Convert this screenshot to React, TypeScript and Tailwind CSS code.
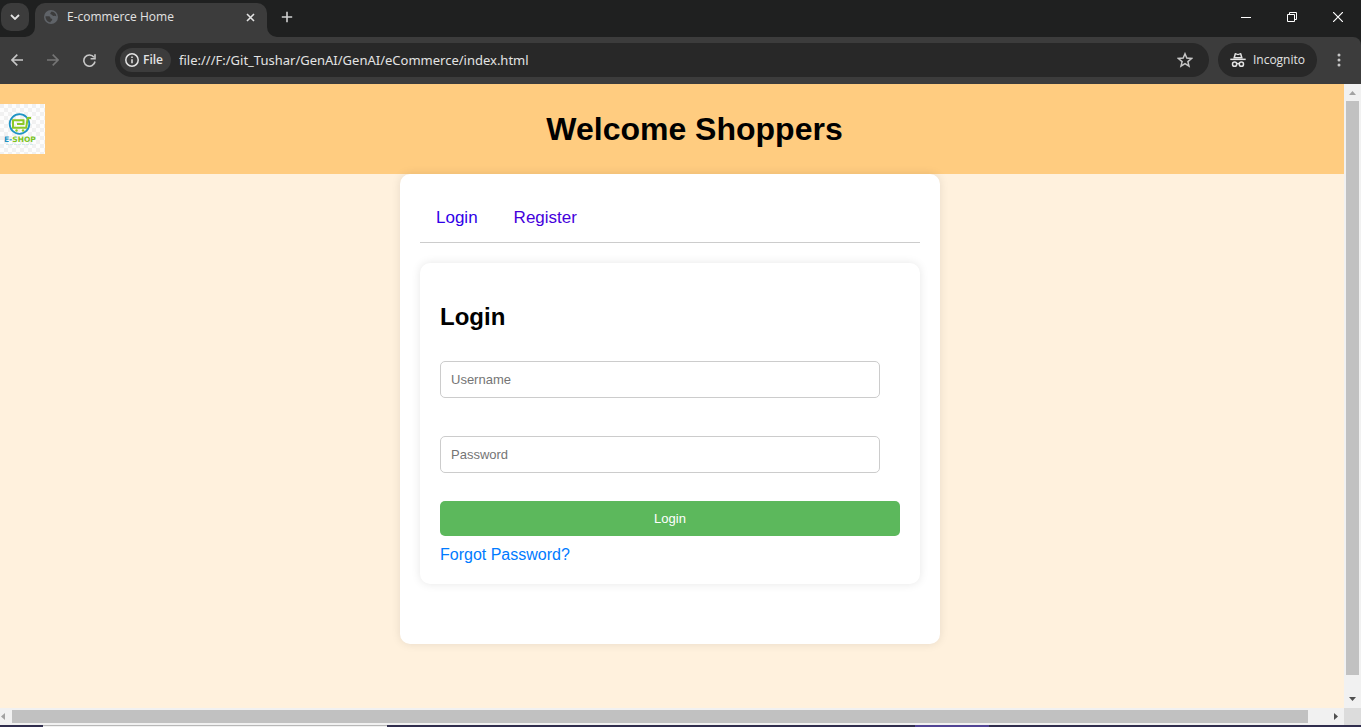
import { useState } from 'react';

function TabStrip() {
  return (
    <div className="flex h-[37px] shrink-0 bg-[#1f2020]">
      <button aria-label="Search tabs" className="ml-px mt-[3px] flex size-7 items-center justify-center rounded-[10px] bg-[#3c3c3c]">
        <svg width="10" height="6" viewBox="0 0 10 6" fill="none" stroke="#e3e3e3" strokeWidth="1.800">
          <path d="M1 1l4 4 4-4" />
        </svg>
      </button>
      <svg className="mt-auto ml-[-4px] shrink-0" width="10" height="10" viewBox="0 0 10 10" fill="#3c3c3c">
        <path d="M10 0v10H0A10 10 0 0 0 10 0z" />
      </svg>
      <div className="mt-[3px] flex w-[232px] items-center rounded-t-[10px] bg-[#3c3c3c] pr-3 pb-1.5 pl-[9px]">
        <svg width="14" height="14" viewBox="0 0 14 14">
          <circle cx="7" cy="7" r="7" fill="#5f6368" />
          <path
            d="M1.500 6.200c2 .1 3.900-.2 4.700.7.500.700-.2 1.400.8 1.700 1 .2 1.600.8 1 1.700-.5.700-1.400.6-1.400 2C3.600 12.100 1.400 9.600 1.500 6.200zM7.600 1.600c-.8.900-1.600 1.500-1.200 2.300.4.700 1.500.2 1.800 1.100.3.900 1.200 1.200 2 .9.900-.3 1.300.2 2.200.5C12.300 3.800 10.300 1.700 7.600 1.600z"
            fill="#3c3c3c"
          />
        </svg>
        <span className="ml-[9px] flex-1 font-['Open_Sans','Noto_Sans',sans-serif] text-[12px] leading-4 text-[#e3e3e3]">
          E-commerce Home
        </span>
        <button aria-label="Close tab">
          <svg width="9" height="9" viewBox="0 0 9 9" stroke="#e3e3e3" strokeWidth="1.600">
            <path d="M1 1l7 7M8 1L1 8" />
          </svg>
        </button>
      </div>
      <svg className="mt-auto shrink-0" width="10" height="10" viewBox="0 0 10 10" fill="#3c3c3c">
        <path d="M0 0v10h10A10 10 0 0 1 0 0z" />
      </svg>
      <button aria-label="New tab" className="ml-1 flex h-[34px] w-3 items-center">
        <svg width="12" height="12" viewBox="0 0 12 12" stroke="#d0d0d0" strokeWidth="1.600">
          <path d="M6 .8v10.400M.8 6h10.400" />
        </svg>
      </button>
      <div className="ml-auto flex h-[34px]">
        <button aria-label="Minimize" className="flex w-[46px] items-center justify-center">
          <svg width="10" height="10" viewBox="0 0 10 10" fill="#fff">
            <path d="M0 5h10v1H0z" />
          </svg>
        </button>
        <button aria-label="Restore" className="flex w-[46px] items-center justify-center">
          <svg width="10" height="10" viewBox="0 0 10 10" fill="none" stroke="#fff">
            <path d="M.5 2.500h7v7h-7zM2.500 2.500v-2h7v7h-2" />
          </svg>
        </button>
        <button aria-label="Close" className="flex w-[46px] items-center justify-center">
          <svg width="10" height="10" viewBox="0 0 10 10" stroke="#fff" strokeWidth="1.200">
            <path d="M0 0l10 10M10 0L0 10" />
          </svg>
        </button>
      </div>
    </div>
  );
}

function Toolbar() {
  const [url, setUrl] = useState('file:///F:/Git_Tushar/GenAI/GenAI/eCommerce/index.html');
  return (
    <div className="shrink-0 bg-[#1f2020]">
      <div className="flex h-[47px] items-center rounded-tr-lg bg-[#3c3c3c] pr-5 pb-px pl-[11px] font-['Open_Sans','Noto_Sans',sans-serif]">
        <button aria-label="Back">
          <svg width="12" height="12" viewBox="0 0 12 12" fill="none" stroke="#c7c7c7" strokeWidth="1.600">
            <path d="M12 6H1M6.300.6L.9 6l5.400 5.400" />
          </svg>
        </button>
        <button aria-label="Forward" className="ml-6">
          <svg width="12" height="12" viewBox="0 0 12 12" fill="none" stroke="#757575" strokeWidth="1.600">
            <path d="M0 6h11M5.700.6L11.100 6l-5.400 5.400" />
          </svg>
        </button>
        <button aria-label="Reload" className="ml-6">
          <svg width="13" height="13" viewBox="0 0 13 13" fill="none" stroke="#c7c7c7" strokeWidth="1.600">
            <path d="M12 7.500A5.600 5.600 0 1 1 11 3.300" />
            <path d="M12.800.3v5.200H7.600V4h3.600V.3z" fill="#c7c7c7" stroke="none" />
          </svg>
        </button>
        <div className="ml-[19px] flex h-[34px] flex-1 items-center rounded-full bg-[#282828] pr-4 pl-[5px]">
          <span className="flex h-6 items-center gap-1 rounded-full bg-[#3c3c3c] pr-2 pl-[5px]">
            <svg width="14" height="14" viewBox="0 0 14 14" fill="none" stroke="#e3e3e3" strokeWidth="1.500">
              <circle cx="7" cy="7" r="6.200" />
              <path d="M7 6.200v4M7 3.600v1.500" />
            </svg>
            <span className="text-[12px] font-semibold text-[#e3e3e3]">File</span>
          </span>
          <input
            aria-label="Address"
            value={url}
            onChange={(e) => setUrl(e.target.value)}
            className="ml-2 min-w-0 flex-1 bg-transparent font-['Noto_Sans',sans-serif] text-[13px] leading-5 text-[#e3e3e3] outline-none"
          />
          <button aria-label="Bookmark this page">
            <svg width="16" height="16" viewBox="0 0 16 16" fill="none" stroke="#c7c7c7" strokeWidth="1.500">
              <path d="M8 1.800l1.800 4.300 4.700.4-3.600 3.100 1.100 4.600L8 11.700l-4 2.500 1.100-4.600L1.500 6.500l4.700-.4z" />
            </svg>
          </button>
        </div>
        <button className="ml-[9px] flex h-[34px] items-center gap-[7px] rounded-full bg-[#282828] px-3">
          <svg width="16" height="16" viewBox="0 0 16 16">
            <path
              d="M3.200 6.400L4.600 1.500Q4.800.9 5.400 1.100L8 1.900l2.600-.8q.6-.2.8.4l1.400 4.900zM5.200 5h5.600l-.7-2.400L8 3.300l-2.100-.7z"
              fill="#e3e3e3"
              fillRule="evenodd"
            />
            <path d="M.3 6.600h15.400v1.500H.3z" fill="#e3e3e3" />
            <g fill="none" stroke="#e3e3e3" strokeWidth="1.500">
              <circle cx="4.600" cy="12.200" r="2.100" />
              <circle cx="11.400" cy="12.200" r="2.100" />
              <path d="M6.600 11.800q1.400-.7 2.800 0" />
            </g>
          </svg>
          <span className="text-[12px] text-[#e3e3e3]">Incognito</span>
        </button>
        <button aria-label="Browser menu" className="ml-5">
          <svg width="4" height="14" viewBox="0 0 4 14" fill="#c7c7c7">
            <circle cx="2" cy="2" r="1.500" />
            <circle cx="2" cy="7" r="1.500" />
            <circle cx="2" cy="12" r="1.500" />
          </svg>
        </button>
      </div>
    </div>
  );
}

function ShopLogo() {
  return (
    <svg width="45" height="50" viewBox="0 0 45 50" className="shrink-0">
      <defs>
        <pattern id="checks" width="8" height="8" patternUnits="userSpaceOnUse">
          <path d="M0 0h8v8H0z" fill="#fdfdfd" />
          <path d="M0 0h4v4H0zM4 4h4v4H4z" fill="#f1f1f1" />
        </pattern>
      </defs>
      <path d="M0 0h45v50H0z" fill="url(#checks)" />
      <circle cx="19.500" cy="20" r="9.800" fill="none" stroke="#1f94c4" strokeWidth="1.800" />
      <path d="M31 14h-3.300l-1.500 9.700H13v-7.500h10.500v3.800h-6.500" fill="none" stroke="#8cc926" strokeWidth="2" />
      <circle cx="16.500" cy="26.500" r="1.200" fill="#8cc926" />
      <circle cx="23" cy="26.500" r="1.200" fill="#8cc926" />
      <text x="4" y="38" fontSize="7.500" fontWeight="700" fontFamily="'DejaVu Sans', sans-serif" fill="#1f94c4">
        E-<tspan fill="#7cc522">SHOP</tspan>
      </text>
      <path d="M6 40.500h28" stroke="#d3eaee" strokeWidth="1" strokeDasharray="3 1" />
    </svg>
  );
}

const fieldClass =
  'block h-[37px] w-[440px] max-w-full rounded-[5px] border border-[#ccc] bg-white px-2.5 text-[13px] text-black placeholder:text-[#757575] outline-none';

function LoginCard() {
  return (
    <section className="w-[540px] max-w-full rounded-[10px] bg-white px-5 pt-5 pb-[60px] shadow-[0_0_10px_rgba(0,0,0,0.1)]">
      <nav className="mb-5 flex gap-1 border-b border-[#ccc] text-[17px] leading-5">
        <a href="#login" className="px-4 py-3.5 text-[#3000e8]">Login</a>
        <a href="#register" className="px-4 py-3.5 text-[#4500dc]">Register</a>
      </nav>
      <form
        onSubmit={(e) => e.preventDefault()}
        className="rounded-[10px] bg-white p-5 shadow-[0_0_10px_rgba(0,0,0,0.1)]"
      >
        <h2 className="mt-5 mb-[30px] text-2xl leading-7 font-bold">Login</h2>
        <input type="text" aria-label="Username" placeholder="Username" className={fieldClass} />
        <input type="password" aria-label="Password" placeholder="Password" className={`${fieldClass} mt-[38px]`} />
        <button type="submit" className="mt-7 block h-[35px] w-full rounded-[5px] bg-[#5cb85c] text-[13px] text-white">
          Login
        </button>
        <a href="#forgot" className="mt-2.5 block leading-[18px] text-[#007bff]">Forgot Password?</a>
      </form>
    </section>
  );
}

function VerticalScrollbar() {
  return (
    <div aria-hidden="true" className="flex w-[17px] shrink-0 flex-col items-center bg-[#f1f1f1]">
      <svg width="17" height="17" viewBox="0 0 17 17" fill="#a3a3a3" className="shrink-0">
        <path d="M5 11l3.500-4 3.500 4z" />
      </svg>
      <div className="w-[13px] flex-1 bg-[#c1c1c1]" />
      <svg width="17" height="33" viewBox="0 0 17 33" fill="#505050" className="shrink-0">
        <path d="M5 22l3.500 4 3.500-4z" />
      </svg>
    </div>
  );
}

function HorizontalScrollbar() {
  return (
    <div aria-hidden="true" className="flex h-[17px] shrink-0 items-center bg-[#f1f1f1]">
      <svg width="12" height="17" viewBox="0 0 12 17" fill="#a3a3a3" className="shrink-0">
        <path d="M5 5v7L1 8.500z" />
      </svg>
      <div className="h-[13px] flex-1 bg-[#c1c1c1]" />
      <svg width="36" height="17" viewBox="0 0 36 17" fill="#505050" className="shrink-0">
        <path d="M26 5v7l4-3.500z" />
      </svg>
      <div className="h-[17px] w-[17px] bg-[#dcdcdc]" />
    </div>
  );
}

export default function App() {
  return (
    <div className="flex h-screen flex-col overflow-hidden font-['Liberation_Sans',Arial,sans-serif] text-base text-black">
      <TabStrip />
      <Toolbar />
      <div className="flex min-h-0 flex-1">
        <div className="flex min-w-0 flex-1 flex-col overflow-hidden bg-[#fff1dd]">
          <header className="flex items-center bg-[#ffcc80] py-5">
            <ShopLogo />
            <h1 className="flex-1 text-center text-[32px] leading-9 font-bold">Welcome Shoppers</h1>
          </header>
          <main className="flex justify-center pr-1">
            <LoginCard />
          </main>
        </div>
        <VerticalScrollbar />
      </div>
      <HorizontalScrollbar />
      <div aria-hidden="true" className="flex h-0.5 shrink-0 bg-[#302d4d]">
        <div className="ml-[43px] w-[344px] border-t border-[#b8b8b8] bg-[#f1f1f1]" />
        <div className="ml-[528px] w-[74px] bg-[#514494]" />
      </div>
    </div>
  );
}
